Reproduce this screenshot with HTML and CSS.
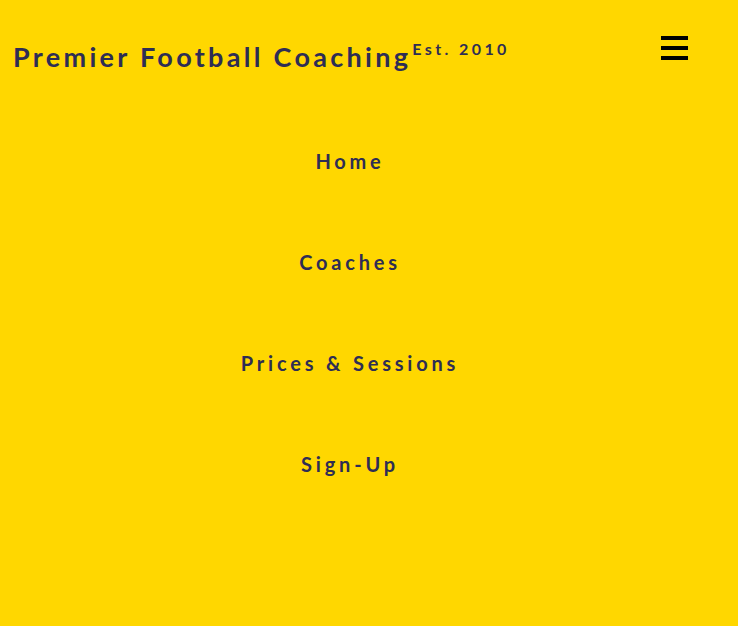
FILE: index.html
```html
<!DOCTYPE html>
<html>
<head>
<meta charset="utf-8">
<link rel="stylesheet" href="styles.css">
</head>
<body>
<header class="header">
  <div class="brand">
    <span class="brand-name">Premier Football Coaching</span><sup class="brand-est">Est. 2010</sup>
  </div>
  <button class="menu-btn" aria-label="Menu">
    <span class="bar"></span><span class="bar"></span><span class="bar"></span>
  </button>
</header>
<nav class="nav">
  <a class="nav-link" href="#">Home</a>
  <a class="nav-link" href="#">Coaches</a>
  <a class="nav-link" href="#">Prices &amp; Sessions</a>
  <a class="nav-link" href="#">Sign-Up</a>
</nav>
</body>
</html>
```
FILE: styles.css
```css
html, body {
  margin: 0;
  padding: 0;
  background: #ffd700;
  height: 100%;
}
body {
  font-family: Lato, "Liberation Sans", sans-serif;
  color: #2e2d54;
}
.header {
  display: flex;
  justify-content: space-between;
  align-items: flex-start;
  padding: 34px 50px 0 13px;
}
.brand {
  display: flex;
  align-items: flex-start;
  padding-top: 8px;
}
.brand-name {
  font-size: 27px;
  font-weight: 700;
  letter-spacing: 3.3px;
  line-height: 30px;
}
.brand-est {
  font-size: 16px;
  font-weight: 700;
  letter-spacing: 3.4px;
  line-height: 16px;
  margin-top: -1px;
  margin-left: 1px;
  vertical-align: baseline;
}
.menu-btn {
  background: none;
  border: 0;
  padding: 2px 0;
  width: 27px;
  display: flex;
  flex-direction: column;
  gap: 6px;
  cursor: pointer;
}
.bar {
  display: block;
  width: 27px;
  height: 4px;
  background: #000;
}
.nav {
  display: flex;
  flex-direction: column;
  align-items: center;
  gap: 77px;
  padding: 77px 38px 0 0;
}
.nav-link {
  font-size: 20px;
  font-weight: 700;
  letter-spacing: 3.8px;
  line-height: 24px;
  color: #2e2d54;
  text-decoration: none;
}
```
